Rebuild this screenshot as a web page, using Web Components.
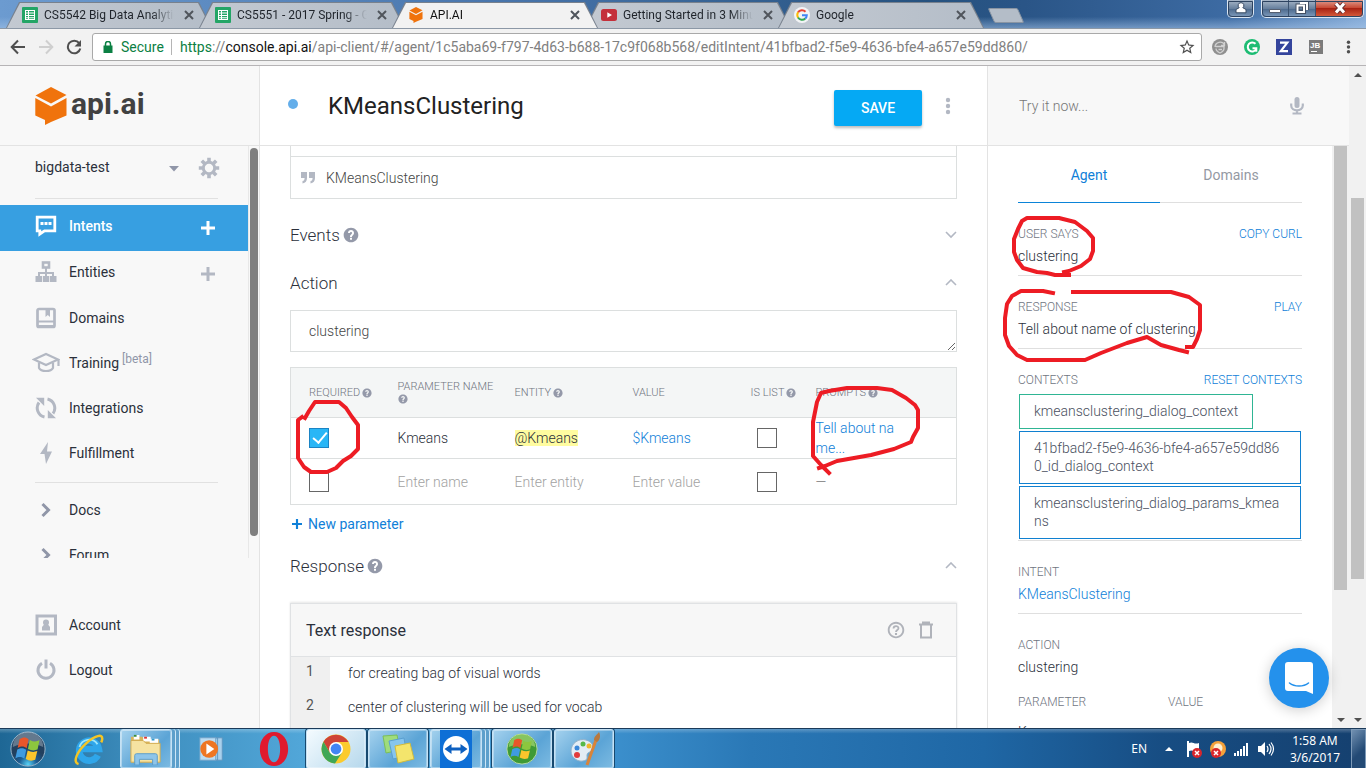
<!DOCTYPE html>
<html lang="en">
<head>
<meta charset="utf-8">
<title>API.AI</title>
<style>
html,body{margin:0;height:100%}
body{font-family:Roboto,"Liberation Sans",sans-serif;font-size:14px;color:#2b303b;overflow:hidden}
</style>
</head>
<body>
<desktop-screen></desktop-screen>
<script>
const define = (name, css, html) => customElements.define(name, class extends HTMLElement {
  connectedCallback() {
    if (this.shadowRoot) return;
    const t = document.createElement('template');
    t.innerHTML = `<style>*{box-sizing:border-box}:host{display:block;box-sizing:border-box}${css}</style>${typeof html === 'function' ? html(this) : html}`;
    this.attachShadow({mode: 'open'}).append(t.content.cloneNode(true));
  }
});

const HELP = '<path fill="currentColor" d="M12 1C5.900 1 1 5.900 1 12s4.900 11 11 11 11-4.900 11-11S18.100 1 12 1zm1.500 18h-3v-3h3v3zm2.300-7.600l-.9.920C13.900 13.300 13.500 13.600 13.500 15h-3v-.5c0-1.100.45-2.100 1.170-2.830l1.240-1.260c.37-.36.59-.86.59-1.410 0-.8-.7-1.500-1.500-1.500s-1.500.7-1.500 1.500H7.500c0-2.500 2-4.500 4.500-4.500s4.500 2 4.500 4.500c0 .88-.2 1.600-.7 2.400z"/>';
const FLAG4 = '<path fill="#e8562a" d="M9 8c3-2 5-1.500 7 0l-1.500 7c-2-1.500-4-2-7-.2z"/><path fill="#8cc63e" d="M17 8.500c2.500 1.500 5 1.500 7.500.3L23 16c-2.500 1-5 .8-7.500-.5z"/><path fill="#3f9be0" d="M7.200 16c3-1.600 5-1.200 7 .2L12.700 23c-2-1.400-4.300-1.700-7-.1z"/><path fill="#fbc52c" d="M15.300 16.700c2.400 1.300 5 1.500 7.500.5l-1.600 6.800c-2.500 1-5 .8-7.400-.6z"/>';
const ICONS = {
  sheets: ['0 0 16 16', '<rect width="16" height="16" rx="1" fill="#23a566"/><path fill="#fff" fill-rule="evenodd" d="M3 3h10v10H3zM4 4v1.500h2V4zm3 0v1.500h5V4zM4 6.500V8h2V6.500zm3 0V8h5V6.500zM4 9v1.300h2V9zm3 0v1.300h5V9zm-3 2.200V12h2v-.8zm3 0V12h5v-.8z"/>'],
  cube: ['0 0 32 38', '<path fill="#f0730c" d="M16 0l15.500 8L16 16.500.5 8.500z"/><path fill="#f0730c" d="M.3 11L16 19.500 31.500 11v17.500L16 35l-6 3v-5L.3 28.500z"/>'],
  youtube: ['0 0 16 12', '<rect width="16" height="12" rx="2.500" fill="#c4303b"/><path fill="#fff" d="M6.300 3.200l4.700 2.800-4.700 2.800z"/>'],
  google: ['0 0 16 16', '<circle cx="8" cy="8" r="8" fill="#f3f4f6"/><g fill="none" stroke-width="2"><path stroke="#ea4335" d="M4 5.400A4.800 4.800 0 0 1 11.500 4.700"/><path stroke="#fbbc05" d="M4.100 5.300a5 5 0 0 0 0 5.300"/><path stroke="#34a853" d="M4 10.500a4.800 4.800 0 0 0 7.300 1"/><path stroke="#4285f4" d="M8 8.200h4.800a4.800 4.800 0 0 1-1.600 3.400"/></g>'],
  close: ['0 0 10 10', '<path stroke="currentColor" stroke-width="2" d="M1 1l8 8M9 1L1 9"/>'],
  back: ['0 0 16 16', '<path fill="none" stroke="currentColor" stroke-width="2" d="M15 8H2M8 1.500L1.700 8 8 14.500"/>'],
  forward: ['0 0 16 16', '<path fill="none" stroke="currentColor" stroke-width="2" d="M1 8h13M8 1.500L14.300 8 8 14.500"/>'],
  reload: ['0 0 16 16', '<path fill="none" stroke="currentColor" stroke-width="2" d="M13.200 4.200A6.300 6.300 0 1 0 14.300 9.500"/><path fill="currentColor" d="M15 1v6.500H8.500z"/>'],
  lock: ['0 0 10 12', '<path fill="#0b8043" d="M1 4.500h8.500V12H.5V4.500z"/><path fill="none" stroke="#0b8043" stroke-width="1.500" d="M2.500 5V3a2.500 2.500 0 0 1 5 0v2"/>'],
  star: ['0 0 24 24', '<path fill="currentColor" d="M22 9.240l-7.190-.62L12 2 9.190 8.630 2 9.240l5.460 4.730L5.820 21 12 17.270 18.180 21l-1.630-7.030L22 9.240zM12 15.400l-3.760 2.270 1-4.280-3.320-2.880 4.380-.38L12 6.100l1.710 4.040 4.380.38-3.320 2.880 1 4.280L12 15.400z"/>'],
  extShield: ['0 0 16 16', '<circle cx="8" cy="8" r="8" fill="#8f8f8f"/><path fill="none" stroke="#d0d0d0" stroke-width="1.300" d="M3 8a5 5 0 0 1 9.500-2M12.500 3v3.500H9M3.500 7.500H12v2c0 2-2 3.500-4 4.500-2-1-4-2.500-4-4.500M6.500 10.500H10"/>'],
  extG: ['0 0 16 16', '<circle cx="8" cy="8" r="8" fill="#1dbc73"/><path fill="none" stroke="#fff" stroke-width="2" d="M11.500 4.800A4.500 4.500 0 1 0 12 10.500M8.500 9.300h3.800v3.500"/>'],
  extZ: ['0 0 16 16', '<rect width="16" height="16" fill="#34449c"/><path fill="none" stroke="#fff" stroke-width="2.200" d="M4 3.700h7.300L4.800 12.200H12"/>'],
  extJB: ['0 0 16 16', '<rect width="14" height="14" x="1" y="1" fill="#7b7b7b"/><text x="2" y="9" font-family="Liberation Sans" font-weight="700" font-size="8" fill="#fff">JB</text><path stroke="#fff" d="M3 12.500h6"/>'],
  dots: ['0 0 6 18', '<g fill="currentColor"><circle cx="3" cy="3" r="2.200"/><circle cx="3" cy="9" r="2.200"/><circle cx="3" cy="15" r="2.200"/></g>'],
  gear: ['0 0 22 22', '<g fill="none" stroke="currentColor"><circle cx="11" cy="11" r="5.700" stroke-width="3"/><path stroke-width="3.600" d="M11 .8v4M11 17.200v4M.8 11h4M17.200 11h4M3.800 3.800l2.800 2.800M15.400 15.400l2.800 2.800M3.800 18.200l2.800-2.800M15.400 6.600l2.800-2.800"/></g>'],
  caret: ['0 0 10 6', '<path fill="currentColor" d="M0 0h10L5 5.500z"/>'],
  plus: ['0 0 14 14', '<path stroke="currentColor" stroke-width="3" d="M0 7h14M7 0v14"/>'],
  intents: ['0 0 22 22', '<path fill="none" stroke="currentColor" stroke-width="2.800" d="M2.200 2.200h17.600v13.600H9.500L4.800 19v-3.200H2.200z"/><path fill="currentColor" d="M5.500 7h3v3h-3zM9.500 7h3v3h-3zM13.500 7h3v3h-3z"/>'],
  entities: ['0 0 22 22', '<g fill="none" stroke="currentColor"><rect x="8" y="1.500" width="6" height="5" stroke-width="2.600"/><path stroke-width="2" d="M11 7v9M4 16v-4h14v4"/></g><g fill="currentColor"><path d="M.5 15h6.500v6H.5zM7.800 15h6.500v6H7.800zM15 15h6.500v6H15z"/></g>'],
  domains: ['0 0 22 22', '<g fill="none" stroke="currentColor" stroke-width="2.700"><rect x="2.500" y="2" width="17" height="18" rx="1.500"/><path stroke-width="2" d="M3 14.500h16M3 19h16"/></g><path fill="currentColor" d="M10.500 3h4.500v7l-2.200-2-2.300 2z"/>'],
  training: ['0 0 28 22', '<g fill="none" stroke="currentColor" stroke-width="2.200"><path d="M2 7.500L14 2l12 5.500-12 5.500z"/><path d="M7 10.500V16c2 4 12 4 14 0v-5.500M26.500 7.500V14"/></g>'],
  integrations: ['0 0 22 22', '<g fill="none" stroke="currentColor" stroke-width="3"><path d="M9.500 20A9.300 9.300 0 0 1 4 5.500"/><path d="M12.500 2a9.300 9.300 0 0 1 5.500 14.500"/></g><path fill="currentColor" d="M1 .8h8.200V9zM21 21.200h-8.200V13z"/>'],
  bolt: ['0 0 22 22', '<path fill="currentColor" d="M13 0L5 12h4.500L11 22l6-12.500h-5z"/>'],
  chevron: ['0 0 22 22', '<path fill="none" stroke="#9096a8" stroke-width="3" d="M7.500 5l6 6-6 6"/>'],
  account: ['0 0 22 22', '<rect x="2" y="2" width="18.500" height="18" fill="none" stroke="currentColor" stroke-width="3"/><circle cx="11" cy="8.500" r="3" fill="currentColor"/><path fill="currentColor" d="M9.500 10h3.200l2.300 3v3.500H7V13z"/>'],
  power: ['0 0 22 22', '<path fill="none" stroke="currentColor" stroke-width="3" d="M7 4.300a8 8 0 1 0 8 0M11 .5v9"/>'],
  quote: ['0 0 14 12', '<path fill="currentColor" d="M0 0h6v6c0 3-1.500 5-4.500 5.500V9C3 8.700 3.500 8 3.600 6H0zM8 0h6v6c0 3-1.500 5-4.500 5.500V9C11 8.700 11.500 8 11.600 6H8z"/>'],
  help: ['0 0 24 24', HELP],
  helpOutline: ['0 0 24 24', '<path fill="currentColor" d="M10.600 18.500h2.800v-2.600h-2.800zM12 1C5.900 1 1 5.900 1 12s4.900 11 11 11 11-4.900 11-11S18.100 1 12 1zm0 19.500c-4.700 0-8.500-3.800-8.500-8.500S7.300 3.500 12 3.500s8.500 3.800 8.500 8.500-3.800 8.500-8.500 8.500z"/><path fill="none" stroke="currentColor" stroke-width="2.400" d="M8.700 10c0-4.300 6.600-4.300 6.600-.3 0 2.300-3.300 2.500-3.300 5"/>'],
  trash: ['0 0 16 18', '<path fill="none" stroke="currentColor" stroke-width="2" d="M1 3.500h14M5 3V1.500h6V3M3 4v12.500h10V4"/>'],
  down: ['0 0 12 8', '<path fill="none" stroke="currentColor" stroke-width="1.600" d="M1 1l5 5 5-5"/>'],
  up: ['0 0 12 8', '<path fill="none" stroke="currentColor" stroke-width="1.600" d="M1 6l5-5 5 5"/>'],
  mic: ['0 0 14 18', '<rect x="4.500" y="0" width="5" height="11" rx="2.500" fill="currentColor"/><path fill="none" stroke="currentColor" stroke-width="2.200" d="M1.200 6.500v2c0 6.500 11.600 6.500 11.600 0v-2M7 13.500V16M2.500 16.500h9"/>'],
  tri: ['0 0 8 4', '<path fill="currentColor" d="M0 4l4-4 4 4z"/>'],
  triDown: ['0 0 8 4', '<path fill="currentColor" d="M0 0h8L4 4z"/>'],
  chat: ['0 0 28 32', '<path fill="#fff" d="M3 0h22a3 3 0 0 1 3 3v29l-7-3H3a3 3 0 0 1-3-3V3a3 3 0 0 1 3-3z"/><path fill="none" stroke="#2491ec" stroke-width="1.600" stroke-linecap="round" d="M4.500 21c5 4 14 4 19 0"/>'],
  user: ['0 0 12 12', '<path fill="#fff" stroke="#384a63" d="M6 .7a2.800 2.800 0 0 1 1.800 5L11 7.500v3.300H1V7.500l3.200-1.800A2.800 2.800 0 0 1 6 .7z"/>'],
  min: ['0 0 12 12', '<path fill="#fff" stroke="#555f70" d="M.5 7.500h11v3H.5z"/>'],
  restore: ['0 0 14 14', '<path fill="none" stroke="#445063" stroke-width="4" d="M2.500 4.500h6.500v6.500H2.500zM5 2h7v7"/><path fill="none" stroke="#fff" stroke-width="2" d="M2.500 4.500h6.500v6.500H2.500zM5 2h7v7"/>'],
  winClose: ['0 0 14 12', '<path stroke="#6c3030" stroke-width="5" d="M3 1.500l8 9M11 1.500l-8 9"/><path stroke="#fff" stroke-width="3" d="M3 1.500l8 9M11 1.500l-8 9"/>'],
  orb: ['0 0 40 40', '<defs><radialGradient id="o" cy=".95"><stop stop-color="#57d3f7"/><stop offset=".5" stop-color="#1c5f96"/><stop offset="1" stop-color="#22405e"/></radialGradient></defs><circle cx="20" cy="20" r="18" fill="url(#o)" stroke="#9db8cc"/><path fill="#fff" opacity=".3" d="M4 18a16 16 0 0 1 32 0c-10-5-22-5-32 0z"/><g transform="translate(-1 -1) scale(1.350)">' + FLAG4 + '</g>'],
  ie: ['0 0 36 36', '<path fill="none" stroke="#2fa6ea" stroke-width="7" d="M28.500 24.500a10.500 10.500 0 1 1 1-6.500H10"/><path fill="none" stroke="#9be6fc" stroke-width="2" d="M9 16a10.500 10.500 0 0 1 19-3"/><path fill="none" stroke="#f4c524" stroke-width="2.600" d="M8 34c-7-2-1-14 8-22S34 1 33 8c0 1-.5 2-1 3"/>'],
  folder: ['0 0 36 34', '<path fill="#d9b55a" d="M2 4h12l2 3h16v24H2z"/><path fill="#fff" d="M5 2h6v5H5zM15 4h8v5h-8zM22 6h9v5h-9z"/><path fill="#3c8c3c" d="M5 2h3v2H5z"/><path fill="#d33" d="M16 4h3v2h-3z"/><path fill="#39c" d="M24 6h3v2h-3z"/><path fill="#f6e3a1" stroke="#d2ab50" d="M2 8h13l3 3h15v20H2z"/><path fill="#8ec5ea" stroke="#5b9cc9" d="M6 34V24q0-2 2-2h20q2 0 2 2v10h-5v-6H11v6z"/>'],
  media: ['0 0 30 30', '<path fill="#a9d0ec" stroke="#5c96c0" d="M10 3h16v24H10zM5 3h16v24H5z"/><rect x="2" y="3" width="17" height="24" fill="#bcdcf2" stroke="#6ba2c9"/><circle cx="12" cy="15" r="9.500" fill="#ee7623"/><path fill="#fff" d="M9 9l8.500 6L9 21z"/>'],
  opera: ['0 0 34 38', '<path fill="#e01a2e" fill-rule="evenodd" d="M17 1c9 0 15 8 15 18s-6 18-15 18S2 29 2 19 8 1 17 1zm0 4c-4 0-6.500 6-6.500 14S13 33 17 33s6.500-6 6.500-14S21 5 17 5z"/>'],
  chrome: ['0 0 30 30', '<circle cx="15" cy="15" r="14.500" fill="#fbcb2e"/><path fill="#cf4437" d="M2.500 7.700L9 19l6-11h12.500A14.500 14.500 0 0 0 2.500 7.700z"/><path fill="#3fa757" d="M2.500 7.700A14.500 14.500 0 0 0 14 29.500L21 18.500 9 19z"/><circle cx="15" cy="15" r="7" fill="#fff"/><circle cx="15" cy="15" r="5.400" fill="#4285f4"/>'],
  notes: ['0 0 34 32', '<path fill="#9fdc7c" stroke="#7abf5a" d="M2 3l14-1 3 15-14 3z"/><path fill="#86c5ee" stroke="#5a9fd0" d="M8 8l15-3 3 18-14 3z"/><path fill="#f4e56c" stroke="#d1bb3c" d="M14 13l15-3 4 16-16 4z"/>'],
  teamviewer: ['0 0 32 38', '<rect width="32" height="38" fill="#0e6fd6"/><circle cx="16" cy="19" r="13" fill="#fff"/><path fill="#0e60c0" d="M4.500 19l7-5v3.500h9V14l7 5-7 5v-3.500h-9V24z"/>'],
  media2: ['0 0 36 36', '<circle cx="18" cy="18" r="16" fill="#3f9a35" stroke="#b9dca6"/><path fill="#b7e37d" opacity=".6" d="M4 16a14 14 0 0 1 28 0c-9-4-19-4-28 0z"/><g transform="translate(-1 -1) scale(1.200)">' + FLAG4 + '</g>'],
  paint: ['0 0 34 36', '<path fill="#e3edf5" stroke="#8fb0c9" d="M4 20C4 12 12 7 19 9s8 7 6 10-5 2-5 5 1 5-4 6S4 27 4 20z"/><circle cx="10" cy="24" r="3" fill="#e23b3b"/><circle cx="10" cy="17" r="2.500" fill="#3a87d9"/><circle cx="16" cy="13" r="2.500" fill="#55b848"/><circle cx="22" cy="15" r="2.500" fill="#f1b62c"/><path stroke="#d8843a" stroke-width="3" d="M29 9l-9 25"/><path fill="#b8793f" d="M27 9c0-4 3-5 5-8 2 4 1 8-2 10z"/>'],
  flag: ['0 0 18 18', '<path stroke="#fff" stroke-width="2" d="M3 1v16"/><path fill="#fff" d="M4 3c4-2 5 2 10 0v8c-5 2-6-2-10 0z"/><circle cx="12" cy="13" r="5" fill="#d8262c"/><path stroke="#fff" stroke-width="1.500" d="M10 11l4 4M14 11l-4 4"/>'],
  shield: ['0 0 18 18', '<circle cx="9" cy="9" r="8" fill="#f5a13a"/><circle cx="9" cy="8" r="4.500" fill="#fff0d0"/><circle cx="7" cy="13" r="5" fill="#d8262c"/><path stroke="#fff" stroke-width="1.500" d="M5 11l4 4M9 11l-4 4"/>'],
  signal: ['0 0 16 14', '<path fill="#fff" d="M0 11h2v3H0zM3 9h2v5H3zM6 7h2v7H6zM9 4h2v10H9zM12 1h2v13h-2z"/>'],
  sound: ['0 0 18 16', '<path fill="#fff" d="M1 5h3l4-4v14l-4-4H1z"/><path fill="none" stroke="#fff" stroke-width="1.200" d="M10 5q2 3 0 6M12 3q4 5 0 10M14 1.500q5 6.500 0 13"/>']
};
define('ui-icon', ':host{display:block;flex:none}svg{display:block}', el => {
  const [vb, body] = ICONS[el.getAttribute('name')];
  return `<svg width="${el.getAttribute('w')}" height="${el.getAttribute('h') || el.getAttribute('w')}" viewBox="${vb}" aria-hidden="true">${body}</svg>`;
});
define('ink-mark', ':host{position:absolute;pointer-events:none;z-index:3}svg{display:block;overflow:visible}path{fill:none;stroke:#ed1c24;stroke-width:4;stroke-linejoin:round;stroke-linecap:square}',
  el => `<svg width="${el.getAttribute('w')}" height="${el.getAttribute('h')}" aria-hidden="true"><path d="${el.getAttribute('d')}"/></svg>`);

define('browser-tab', `
:host{flex:0 1 206px;min-width:0;margin-right:-13px;height:26px;position:relative;font:12px/26px Roboto,sans-serif;color:#1f242b}
.edge,.face{position:absolute;inset:0;clip-path:polygon(0 100%,13px 0,calc(100% - 13px) 0,100% 100%)}
.edge{background:#78818d}.face{inset:1px 1px 0;background:linear-gradient(90deg,#c3c9d1,#b4bdc8)}
:host([active]){z-index:2;color:#111}:host([active]) .face{background:#f2f2f2}
.row{position:relative;display:flex;align-items:center;gap:6px;padding:0 18px 0 16px;height:100%}
.t{flex:1;overflow:hidden;white-space:nowrap;-webkit-mask:linear-gradient(90deg,#000 80%,transparent 97%);mask:linear-gradient(90deg,#000 80%,transparent 97%)}
button{border:0;background:none;padding:0;color:#50555c}`,
el => `<span class="edge"></span><span class="face"></span><div class="row"><ui-icon name="${el.getAttribute('icon')}" w="16"></ui-icon><span class="t"><slot></slot></span><button aria-label="Close tab"><ui-icon name="close" w="10"></ui-icon></button></div>`);

define('window-controls', `
:host{display:flex;gap:7px;height:18px}
.g{display:flex;border:1px solid #dbe6f2;border-top:0;border-radius:0 0 5px 5px;overflow:hidden;outline:1px solid #2d4360;outline-offset:-2px}
button{border:0;padding:0 0 2px;display:grid;place-items:center;background:linear-gradient(#a9b8c9,#67809e 50%,#4b688b 51%,#7f9cbd);width:27px;border-right:1px solid #3c5471}
.n{width:25px;border:0}.x{width:47px;background:linear-gradient(#dfa093,#c84a35 45%,#a92313 50%,#d9603f);border:0}`,
`<div class="g"><button class="n" aria-label="Profile"><ui-icon name="user" w="12"></ui-icon></button></div>
<div class="g"><button aria-label="Minimize"><ui-icon name="min" w="12"></ui-icon></button><button aria-label="Restore"><ui-icon name="restore" w="14"></ui-icon></button><button class="x" aria-label="Close"><ui-icon name="winClose" w="14" h="12"></ui-icon></button></div>`);

define('tab-strip', `
:host{display:flex;height:29px;align-items:flex-end;padding:0 2px 0 6px;border-bottom:1px solid #8c98a6;background:linear-gradient(#0000 60%,#a7c6ea88),linear-gradient(90deg,#6c9bd0,#4a77ae 35%,#26527f 68%,#2a5587 75%,#3d6ba3 90%,#86acd8)}
nav{display:flex;flex:1;min-width:0;align-items:flex-end}
.new{border:1px solid #8a95a3;background:#b4bdc8;width:30px;height:15px;margin:0 0 5px 20px;transform:skewX(24deg);border-radius:2px;padding:0}
window-controls{align-self:flex-start}`,
`<nav><browser-tab icon="sheets">CS5542 Big Data Analytics</browser-tab><browser-tab icon="sheets">CS5551 - 2017 Spring - Google</browser-tab><browser-tab icon="cube" active>API.AI</browser-tab><browser-tab icon="youtube">Getting Started in 3 Minutes</browser-tab><browser-tab icon="google">Google</browser-tab><button class="new" aria-label="New tab"></button></nav><window-controls></window-controls>`);

define('browser-toolbar', `
:host{display:flex;align-items:center;height:37px;padding:0 15px 0 10px;background:#f2f2f2;border-bottom:1px solid #b6b4b6}
button{border:0;background:none;padding:0;color:#4f4f4f}
.nav{display:flex;gap:12px;margin-right:10px}.nav .off{color:#cfcfcf}
.box{flex:1;min-width:0;display:flex;align-items:center;height:28px;padding:0 5px 0 10px;border:1px solid #a9a9a9;border-radius:3px;background:#fff;font-size:14px}
.sec{color:#0b8043;width:42px;margin:0 8px}.bar{width:1px;height:16px;background:#b5b5b5;margin-right:8px}
.url{flex:1;color:#808080;white-space:nowrap;overflow:hidden;outline:0}.url i{font-style:normal;color:#0b8043}.url b{font-weight:400;color:#111}
.ext{display:flex;gap:16px;margin-left:10px;align-items:center}.ext .m{margin-left:6px}`,
`<div class="nav"><button aria-label="Back"><ui-icon name="back" w="16"></ui-icon></button><button class="off" aria-label="Forward"><ui-icon name="forward" w="16"></ui-icon></button><button aria-label="Reload"><ui-icon name="reload" w="16"></ui-icon></button></div>
<div class="box"><ui-icon name="lock" w="10" h="12"></ui-icon><span class="sec">Secure</span><span class="bar"></span><div class="url" role="textbox" aria-label="Address" tabindex="0"><i>https</i>://<b>console.api.ai</b>/api-client/#/agent/1c5aba69-f797-4d63-b688-17c9f068b568/editIntent/41bfbad2-f5e9-4636-bfe4-a657e59dd860/</div><button aria-label="Bookmark"><ui-icon name="star" w="18"></ui-icon></button></div>
<div class="ext"><button aria-label="Shield"><ui-icon name="extShield" w="16"></ui-icon></button><button aria-label="Grammar"><ui-icon name="extG" w="16"></ui-icon></button><button aria-label="References"><ui-icon name="extZ" w="16"></ui-icon></button><button aria-label="Toolbox"><ui-icon name="extJB" w="16"></ui-icon></button><button class="m" aria-label="Menu"><ui-icon name="dots" w="5" h="14"></ui-icon></button></div>`);

define('scroll-bar', `
:host{display:flex;flex-direction:column;width:17px;flex:none;background:#f1f1f1;color:#505050}
.a{height:17px;display:grid;place-items:center}.track{flex:1;display:flex;flex-direction:column;padding:0 2px}.thumb{background:#c1c1c1}`,
el => { const [a, b, c] = el.getAttribute('parts').split(' ');
return `${el.hasAttribute('top') ? '<div class="a"><ui-icon name="tri" w="8" h="4"></ui-icon></div>' : ''}<div class="track"><div style="flex:${a}"></div><div class="thumb" style="flex:${b}"></div><div style="flex:${c}"></div></div><div class="a"><ui-icon name="triDown" w="8" h="4"></ui-icon></div>`; });

define('nav-item', `
:host{flex:none}
a{display:flex;align-items:center;height:45px;padding:0 30px 4px 35px;color:#2b303b;text-decoration:none}
:host([tall]) a{height:46px}
.i{width:21px;display:grid;justify-items:center;justify-content:center;color:#b3b8c3;margin-right:13px}
.t{flex:1;display:flex}.plus{color:#b3b8c3;padding:3px 3px 0 0}
:host([active]) a{background:#379fe1;color:#fff;font-weight:500}:host([active]) .i,:host([active]) .plus{color:#fff}`,
el => `<a href="#${el.getAttribute('icon')}"><span class="i"><ui-icon name="${el.getAttribute('icon')}" w="${el.getAttribute('w') || 22}" h="22"></ui-icon></span><span class="t"><slot></slot></span>${el.hasAttribute('add') ? '<span class="plus"><ui-icon name="plus" w="14"></ui-icon></span>' : ''}</a>`);

define('side-nav', `
:host{width:260px;flex:none;display:flex;flex-direction:column;background:#f8f8f8;border-right:1px solid #e3e3e3}
header{height:80px;flex:none;border-bottom:1px solid #e3e3e3;display:flex;align-items:center;gap:4px;padding-left:35px;font:700 30px/40px Roboto,sans-serif;color:#414141}
header span{padding-bottom:4px}
.s{flex:1;min-height:0;display:flex}.list{flex:1;overflow:hidden;border-right:1px solid #e8e8e8;display:flex;flex-direction:column}
.agent{flex:none;display:flex;align-items:center;height:43px;padding:0 28px 0 35px}.agent span{flex:1;padding-bottom:2px}
button{border:0;background:none;padding:0;color:#b3b8c3;display:block}.agent .c{color:#9096a8;margin:3px 19px 0 0}
hr{flex:none;width:183px;border:0;border-top:1px solid #e1e1e1;margin:9px 0 6px 35px}hr.b{margin:5px 0 6px 35px}
.bar{width:10px;padding:2px 1px 22px}.bar i{display:block;height:100%;border-radius:4px;background:#7f7f7f}
footer{height:170px;flex:none;padding-top:46px}
small{font-size:12px;line-height:14px;color:#9096a8;margin:-3px 0 0 3px}`,
`<header><ui-icon name="cube" w="32" h="38"></ui-icon><span>api.ai</span></header>
<div class="s"><nav class="list"><div class="agent"><span>bigdata-test</span><button class="c" aria-label="Choose agent"><ui-icon name="caret" w="10" h="6"></ui-icon></button><button aria-label="Settings"><ui-icon name="gear" w="22"></ui-icon></button></div><hr>
<nav-item icon="intents" tall active add>Intents</nav-item><nav-item icon="entities" tall add>Entities</nav-item><nav-item icon="domains">Domains</nav-item><nav-item icon="training" w="28">Training<small>[beta]</small></nav-item><nav-item icon="integrations">Integrations</nav-item><nav-item icon="bolt">Fulfillment</nav-item><hr class="b"><nav-item icon="chevron">Docs</nav-item><nav-item icon="chevron">Forum</nav-item></nav><div class="bar"><i></i></div></div>
<footer><nav-item icon="account">Account</nav-item><nav-item icon="power">Logout</nav-item></footer>`);

define('section-head', `
:host{display:flex;align-items:center;height:48px;font-size:17px;font-weight:300;gap:3px}
h2{font:inherit;margin:0}ui-icon{color:#9499a9}.f{flex:1}button{border:0;background:none;padding:0}button ui-icon{color:#b3b8c3}`,
el => `<h2><slot></slot></h2>${el.hasAttribute('help') ? '<ui-icon name="help" w="16"></ui-icon>' : ''}<span class="f"></span><button aria-label="Toggle"><ui-icon name="${el.getAttribute('arrow')}" w="12" h="8"></ui-icon></button>`);

define('check-box', `
:host{display:block}
input{appearance:none;display:block;margin:0;width:20px;height:20px;border:1px solid #666;background:#fff;position:relative}
input:checked{background:#29b6f6;border-color:#1b84c4}
input:checked::before{content:"";position:absolute;left:6px;top:0;width:6px;height:12px;border:solid #fff;border-width:0 2px 2px 0;rotate:40deg}`,
el => `<input type="checkbox" aria-label="${el.getAttribute('label')}"${el.hasAttribute('checked') ? ' checked' : ''}>`);

define('param-table', `
:host{position:relative}
table{width:100%;table-layout:fixed;border-collapse:collapse;border:1px solid #dcdfdf;font-weight:300}
.a{width:107px}.b{width:117px}.c{width:118px}.d{width:118px}.e{width:65px}
th{height:50px;background:#f4f6f6;font-size:11px;line-height:15px;font-weight:300;color:#70757f;text-align:left;padding:0 12px 0 0;white-space:nowrap}
th.w{white-space:normal;padding-bottom:2px}th span{display:inline-flex;align-items:center;gap:2px}th ui-icon{color:#9499a9}
tr>:first-child{padding-left:18px}th.n{padding-right:0}
td{padding:0;border-top:1px solid #dcdfdf}tr.one td{height:41px}tr.two td{height:46px}
input{border:0;padding:0;width:100px;font:inherit;color:inherit;background:none;outline:0;display:block}::placeholder{color:#a2a2a2;opacity:1}
mark{background:#fffca0;color:#2b303b}a{color:#1080d8;text-decoration:none}.p a{display:block;width:84px;line-height:20px;word-break:break-all}
.l{padding-left:6px}.dash{color:#777}
.m1{left:5px;top:33px}.m2{left:521px;top:19px}`,
`<table><thead><tr><th class="a"><span>REQUIRED <ui-icon name="help" w="10"></ui-icon></span></th><th class="b w">PARAMETER NAME <ui-icon name="help" w="10"></ui-icon></th><th class="c"><span>ENTITY <ui-icon name="help" w="10"></ui-icon></span></th><th class="d">VALUE</th><th class="e n"><span>IS LIST <ui-icon name="help" w="10"></ui-icon></span></th><th><span>PROMPTS <ui-icon name="help" w="10"></ui-icon></span></th></tr></thead>
<tbody><tr class="one"><td><check-box label="Required" checked></check-box></td><td>Kmeans</td><td><mark>@Kmeans</mark></td><td><a href="#value">$Kmeans</a></td><td class="l"><check-box label="Is list"></check-box></td><td class="p"><a href="#prompts">Tell about name...</a></td></tr>
<tr class="two"><td><check-box label="Required"></check-box></td><td><input aria-label="Name" placeholder="Enter name"></td><td><input aria-label="Entity" placeholder="Enter entity"></td><td><input aria-label="Value" placeholder="Enter value"></td><td class="l"><check-box label="Is list"></check-box></td><td class="dash">—</td></tr></tbody></table>
<ink-mark class="m1" w="66" h="74" d="M10 18L14 11 20 2H44L51 8 57 17 63 25V49L56 56 48 61 41 68 32 72H16L9 67 3 58V20L7 17"></ink-mark>
<ink-mark class="m2" w="112" h="92" d="M8 82L14 80 26 75 60 69 83 63 100 56 102 51 107 42V24L104 19 95 12 81 4 66 2H36L18 5 10 7 6 16 2 36V70L10 79 18 87"></ink-mark>`);

define('text-response', `
:host{border:1px solid #e0e2e4;border-bottom:0;box-shadow:0 -1px 2px #0000001a}
header{display:flex;align-items:center;gap:13px;height:53px;padding:0 22px 0 15px;background:#f7f7f7;border-bottom:1px solid #e0e2e4;font-size:16px}
h3{font:inherit;font-size:16px;font-weight:400;margin:0;flex:1}button{border:0;background:none;padding:0;color:#b0b3ba;display:block}
ol{list-style:none;margin:0;padding:0}li{display:flex;height:34px;line-height:32px}
li i{font-style:normal;width:39px;padding-left:15px;background:#f0f0f0;color:#555;line-height:28px}li span{padding-left:18px;font-weight:300}`,
`<header><h3>Text response</h3><button aria-label="Help"><ui-icon name="helpOutline" w="18"></ui-icon></button><button aria-label="Delete"><ui-icon name="trash" w="16" h="18"></ui-icon></button></header>
<ol><li><i>1</i><span>for creating bag of visual words</span></li><li><i>2</i><span>center of clustering will be used for vocab</span></li><li><i></i><span></span></li></ol>`);

define('intent-editor', `
:host{flex:1;min-width:0;display:flex;flex-direction:column;background:#fff}
header{flex:none;display:flex;align-items:center;height:80px;border-bottom:1px solid #e3e3e3;padding:0 36px 0 28px}
.dot{width:10px;height:10px;border-radius:5px;background:#64aeea;margin:0 30px 4px 0}
h1{flex:1;font-size:24px;font-weight:400;line-height:32px;margin:0;color:#222}
.save{width:88px;height:36px;margin:4px 23px 0 0;border:0;border-radius:2px;background:#05a9f4;color:#fff;font:500 14px Roboto;box-shadow:0 2px 3px #0004}
.more{border:0;background:none;padding:0;color:#b3b8c3}
.body{flex:1;min-height:0;overflow:hidden;padding:0 30px}
.prev{height:10px;border:solid #dcdfdf;border-width:0 1px}
.say{display:flex;align-items:center;gap:11px;height:43px;border:1px solid #dcdfdf;padding:0 10px;color:#b3b8c3;margin-bottom:12px}
.say input,textarea{font:300 14px/20px Roboto;color:#444;border:0;outline:0;flex:1;padding:0;background:none}
textarea{display:block;width:100%;height:42px;border:1px solid #dcdfdf;padding:10px 18px;margin:3px 0 15px;resize:vertical;overflow:hidden}
.new{display:flex;align-items:center;gap:6px;height:37px;border:0;background:none;padding:0 2px;color:#1080d8;font:400 14px Roboto}
text-response{margin-top:13px}`,
`<header><span class="dot"></span><h1>KMeansClustering</h1><button class="save">SAVE</button><button class="more" aria-label="More"><ui-icon name="dots" w="6" h="18"></ui-icon></button></header>
<div class="body"><div class="prev"></div><div class="say"><ui-icon name="quote" w="14" h="12"></ui-icon><input aria-label="User says" value="KMeansClustering"></div>
<section-head help arrow="down">Events</section-head><section-head arrow="up">Action</section-head><textarea aria-label="Action">clustering</textarea><param-table></param-table><button class="new"><ui-icon name="plus" w="10"></ui-icon>New parameter</button><section-head help arrow="up">Response</section-head><text-response></text-response></div>`);

define('panel-block', `
:host{position:relative;padding-top:22px;height:73px;border-bottom:1px solid #dfdfdf}
:host([auto]){height:auto}:host([last]){border:0}
.h{display:flex;justify-content:space-between;font-size:12px;line-height:18px;font-weight:300;color:#70757f}a{color:#1080d8;text-decoration:none}
.b{font-weight:300;line-height:26px}:host([auto]) .b{padding-top:5px}`,
el => `<div class="h"><span>${el.getAttribute('label')}</span>${el.hasAttribute('action') ? `<a href="#act">${el.getAttribute('action')}</a>` : ''}</div><div class="b"><slot></slot></div>`);

define('context-chip', `
:host{display:block;width:fit-content;margin:0 1px 2px;padding:7px 14px 8px;border:1px solid #1080d0;color:#4a5060;line-height:18px;word-break:break-all}
:host([fresh]){border-color:#2fb594}:host([full]){width:auto;padding-right:20px}:host(:last-child){margin-bottom:1px}`, '<slot></slot>');

define('test-panel', `
:host{width:362px;flex:none;display:flex;flex-direction:column;border-left:1px solid #e3e3e3;background:#fff}
header{flex:none;display:flex;align-items:center;height:80px;background:#f8f8f8;border-bottom:1px solid #e3e3e3;padding:0 45px 0 31px}
header input{flex:1;min-width:0;padding:0;border:0;background:none;font:300 14px Roboto;outline:0}::placeholder{color:#777;opacity:1}
button{border:0;background:none;padding:0;color:#b3b8c3}
.row{flex:1;min-height:0;display:flex}.c{flex:1;min-width:0;overflow:hidden;padding:0 30px}
.tabs{display:flex;height:57px}
.tabs button{flex:1;height:57px;padding-top:2px;font:400 14px Roboto;color:#9499a3;border-bottom:1px solid #dfdfdf}.tabs .on{color:#1080d8;border-bottom-color:#0b84d8}
.m1{left:-7px;top:13px}.m2{left:-15px;top:12px}a{color:#1080d8;text-decoration:none}
.kv{display:grid;grid-template-columns:150px 1fr;font-weight:300;line-height:30px}.kv b{font-weight:300;font-size:12px;color:#70757f}`,
`<header><input aria-label="Try it now" placeholder="Try it now..."><button aria-label="Speak"><ui-icon name="mic" w="14" h="18"></ui-icon></button></header>
<div class="row"><div class="c"><div class="tabs"><button class="on">Agent</button><button>Domains</button></div>
<panel-block label="USER SAYS" action="COPY CURL">clustering<ink-mark class="m1" w="84" h="62" d="M58 59L44 59 36 57 26 56 12 52 6 44 3 36V23L7 13 11 5 16 2H48L64 6 76 15 82 22V35L79 43 70 50 58 55 53 56"></ink-mark></panel-block>
<panel-block label="RESPONSE" action="PLAY">Tell about name of clustering<ink-mark class="m2" w="200" h="76" d="M50 5L40 3H18L9 8 4 16 2 30V47L6 58 14 67 24 72H82L98 65 124 55 144 49 158 57 176 62 184 64M184 59H190L194 51 197 42V17L186 9 168 4H70"></ink-mark></panel-block>
<panel-block label="CONTEXTS" action="RESET CONTEXTS" auto><context-chip fresh>kmeansclustering_dialog_context</context-chip><context-chip full>41bfbad2-f5e9-4636-bfe4-a657e59dd860_id_dialog_context</context-chip><context-chip full>kmeansclustering_dialog_params_kmeans</context-chip></panel-block>
<panel-block label="INTENT"><a href="#intent">KMeansClustering</a></panel-block><panel-block label="ACTION" last>clustering</panel-block>
<div class="kv"><b>PARAMETER</b><b>VALUE</b><span>Kmeans</span></div></div><scroll-bar parts="0 444 121"></scroll-bar></div>`);

define('chat-launcher', `
:host{position:absolute;right:37px;bottom:20px;z-index:4}
button{width:60px;height:60px;border:0;border-radius:50%;background:#2491ec;display:grid;place-items:center;padding:0;box-shadow:0 2px 14px #0003}`,
`<button aria-label="Open chat"><ui-icon name="chat" w="28" h="32"></ui-icon></button>`);

define('task-button', `
:host{width:60px;flex:none;height:40px}
button{width:100%;height:40px;border:1px solid transparent;background:none;padding:0;display:grid;place-items:center;border-radius:3px}
:host([open]) button{border-color:#c5e2f5;background:linear-gradient(135deg,#a5d2ee,#5ba4d6 60%,#7dbbe2);box-shadow:inset 0 0 0 1px #ffffff55,0 0 0 1px #17496f}
:host([lit]) button{background:linear-gradient(135deg,#f4fbff,#b6d8ec)}
:host([stack]) button{width:52px;box-shadow:inset 0 0 0 1px #ffffff66,3px 0 0 #5c9fcb,4px 0 0 #cde6f6,7px 0 0 #5c9fcb,8px 0 0 #cde6f6}`,
el => `<button aria-label="${el.getAttribute('label')}"><ui-icon name="${el.getAttribute('icon')}" w="${el.getAttribute('w') || 30}" h="${el.getAttribute('h') || 32}"></ui-icon></button>`);

define('task-bar', `
:host{flex:none;display:flex;align-items:center;gap:2px;height:40px;border-top:1px solid #1b3a59;overflow:hidden;color:#fff;font:12px/17px "Noto Sans",sans-serif;
background:linear-gradient(#ffffff40,#fff0 12%),linear-gradient(90deg,#1e6795,#3d8dbd 10%,#51a6d8 22%,#3b8fcc 45%,#2a78b6 55%,#1f67a5 72%,#174d83 85%,#15406f)}
.start{width:56px}.f{flex:1}.tray{display:flex;align-items:center;gap:6px}.tray span{margin-right:12px}.tray .up{margin-right:6px}
time{text-align:center;width:64px;margin:0 2px 0 6px}
.desk{width:15px;height:40px;border:1px solid #7d9ab8;background:linear-gradient(135deg,#7190b1,#234a75 60%);padding:0}`,
`<task-button class="start" icon="orb" label="Start" w="38" h="38"></task-button><task-button icon="ie" label="Internet Explorer" w="34" h="34"></task-button><task-button open stack icon="folder" label="Explorer" w="34"></task-button><task-button icon="media" label="Media Player" w="28" h="28"></task-button><task-button icon="opera" label="Opera" w="32" h="36"></task-button><task-button open lit icon="chrome" label="Chrome"></task-button><task-button open icon="notes" label="Sticky Notes" w="34"></task-button><task-button open stack icon="teamviewer" label="TeamViewer" w="32" h="38"></task-button><task-button open icon="media2" label="Media Center" w="34" h="34"></task-button><task-button open icon="paint" label="Paint" w="34" h="36"></task-button>
<span class="f"></span><div class="tray"><span>EN</span><ui-icon class="up" name="tri" w="8" h="4"></ui-icon><ui-icon name="flag" w="18"></ui-icon><ui-icon name="shield" w="18"></ui-icon><ui-icon name="signal" w="18" h="14"></ui-icon><ui-icon name="sound" w="18" h="16"></ui-icon></div><time>1:58 AM<br>3/6/2017</time><button class="desk" aria-label="Show desktop"></button>`);

define('desktop-screen', `
:host{display:flex;flex-direction:column;height:100vh;background:#fff}
.page{flex:1;min-height:0;display:flex;position:relative}`,
`<tab-strip></tab-strip><browser-toolbar></browser-toolbar><div class="page"><side-nav></side-nav><intent-editor></intent-editor><test-panel></test-panel><scroll-bar top parts="115 381 132"></scroll-bar><chat-launcher></chat-launcher></div><task-bar></task-bar>`);
</script>
</body>
</html>
